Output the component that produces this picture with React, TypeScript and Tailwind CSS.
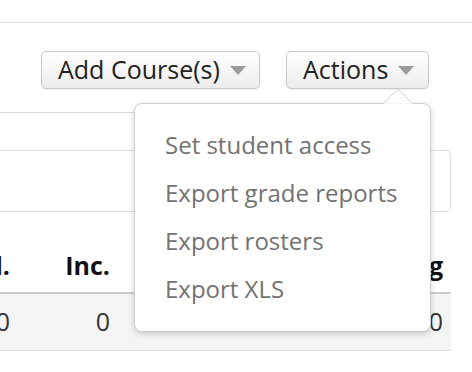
import React from "react";

function Caret() {
  return (
    <svg width="16" height="10" viewBox="0 0 16 10" className="ml-[10px] mt-[2px]">
      <polygon points="0,0 16,0 8,9" fill="#9a9a9a" />
    </svg>
  );
}

export default function App() {
  const items = ["Set student access", "Export grade reports", "Export rosters", "Export XLS"];
  return (
    <div
      className="relative w-[472px] h-[372px] overflow-hidden bg-white"
      style={{ fontFamily: "'Open Sans', Lato, sans-serif" }}
    >
      <div className="h-[22px]" />
      <div className="h-px bg-[#dcdcdc]" />
      <div className="flex pl-[41px] pt-[28px] gap-[26px]">
        <button className="flex items-center h-[38px] w-[219px] pl-[16px] rounded-[5px] border border-[#c8c8c8] bg-gradient-to-b from-white to-[#ececec] text-[25px] text-[#222] shadow-[0_1px_1px_rgba(0,0,0,0.06)]">
          Add Course(s)
          <Caret />
        </button>
        <button className="flex items-center h-[38px] w-[143px] pl-[16px] rounded-[5px] border border-[#c8c8c8] bg-gradient-to-b from-white to-[#ececec] text-[25px] text-[#222] shadow-[0_1px_1px_rgba(0,0,0,0.06)]">
          Actions
          <Caret />
        </button>
      </div>
      <div className="mt-[23px] h-px w-[420px] bg-[#dcdcdc]" />
      <div className="mt-[37px] ml-[-20px] w-[471px] h-[62px] rounded-[5px] border border-[#dcdcdc]" />
      <div className="mt-[27px] ml-[-90px] w-[541px] flex items-center h-[55px] border-b-[2px] border-[#cccccc] text-[25px] font-bold text-[#111]">
        <div className="w-[100px] text-right">Lvl.</div>
        <div className="w-[100px] text-right">Inc.</div>
        <div className="flex-1" />
        <div className="pr-[8px] text-right">Avg</div>
      </div>
      <div className="ml-[-90px] w-[541px] flex items-center h-[57px] bg-[#f4f4f4] border-b border-[#dedede] text-[25px] text-[#333]">
        <div className="w-[100px] text-right">0</div>
        <div className="w-[100px] text-right">0</div>
        <div className="flex-1 pl-[162px]">.</div>
        <div className="pr-[8px] text-right">0</div>
      </div>

      <div className="absolute left-[134px] top-[103px] w-[297px] h-[229px] rounded-[8px] border border-[#cfcfcf] bg-white shadow-[0_2px_6px_rgba(0,0,0,0.18)] pt-[17px] pl-[30px]">
        {items.map((t) => (
          <div key={t} className="h-[48px] flex items-center text-[24px] text-[#727272]">
            {t}
          </div>
        ))}
      </div>
      <svg className="absolute left-[383px] top-[88px]" width="30" height="17" viewBox="0 0 30 17">
        <polygon points="0,16 15,1 30,16" fill="white" stroke="#cfcfcf" strokeWidth="1" />
        <rect x="0" y="15.5" width="30" height="2" fill="white" />
      </svg>
    </div>
  );
}
